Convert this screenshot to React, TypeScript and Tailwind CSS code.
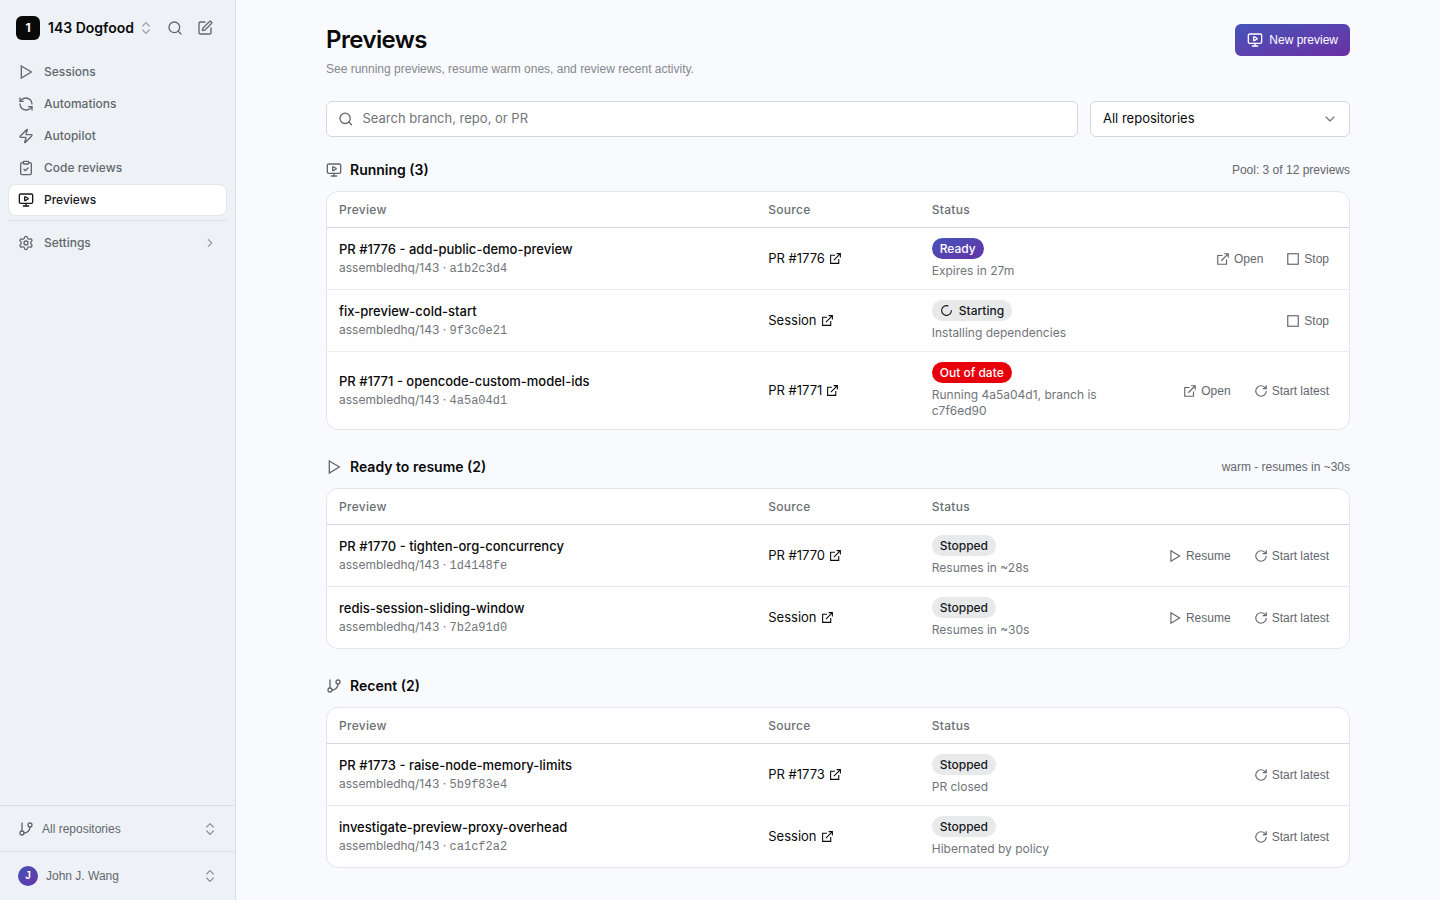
import type { ReactNode } from "react";
import {
  ChevronDown,
  ChevronRight,
  ChevronsUpDown,
  ClipboardCheck,
  GitBranch,
  LoaderCircle,
  MonitorPlay,
  RefreshCcw,
  Search,
  Settings,
  SquarePen,
  Zap,
} from "lucide-react";

type IconProps = { className?: string; strokeWidth?: number; children?: ReactNode };

function SharpIcon({ className, strokeWidth = 2, children }: IconProps) {
  return (
    <svg
      viewBox="0 0 24 24"
      fill="none"
      stroke="currentColor"
      strokeWidth={strokeWidth}
      strokeLinecap="butt"
      strokeLinejoin="miter"
      className={className}
      aria-hidden="true"
    >
      {children}
    </svg>
  );
}

function PlayIcon(props: IconProps) {
  return (
    <SharpIcon {...props}>
      <polygon points="5 3 20 12 5 21" />
    </SharpIcon>
  );
}

function StopIcon(props: IconProps) {
  return (
    <SharpIcon {...props}>
      <rect x="3" y="3" width="18" height="18" />
    </SharpIcon>
  );
}

function OpenIcon(props: IconProps) {
  return (
    <SharpIcon {...props}>
      <path d="M14 3h7v7M9 15 21 3M18 13v8H3V6h8" />
    </SharpIcon>
  );
}

function RestartIcon(props: IconProps) {
  return (
    <SharpIcon {...props}>
      <path d="M21 12a9 9 0 1 1-9-9c2.52 0 4.93 1 6.74 2.74L21 8" />
      <path d="M21 2v6h-6" />
    </SharpIcon>
  );
}

const navItems = [
  { label: "Sessions", icon: PlayIcon },
  { label: "Automations", icon: RefreshCcw },
  { label: "Autopilot", icon: Zap },
  { label: "Code reviews", icon: ClipboardCheck },
  { label: "Previews", icon: MonitorPlay, active: true },
];

type Action = "Open" | "Stop" | "Resume" | "Start latest";
type Status = "Ready" | "Starting" | "Out of date" | "Stopped";

type Preview = {
  name: string;
  commit: string;
  source: string;
  status: Status;
  detail: string;
  actions: Action[];
};

const running: Preview[] = [
  {
    name: "PR #1776 - add-public-demo-preview",
    commit: "a1b2c3d4",
    source: "PR #1776",
    status: "Ready",
    detail: "Expires in 27m",
    actions: ["Open", "Stop"],
  },
  {
    name: "fix-preview-cold-start",
    commit: "9f3c0e21",
    source: "Session",
    status: "Starting",
    detail: "Installing dependencies",
    actions: ["Stop"],
  },
  {
    name: "PR #1771 - opencode-custom-model-ids",
    commit: "4a5a04d1",
    source: "PR #1771",
    status: "Out of date",
    detail: "Running 4a5a04d1, branch is c7f6ed90",
    actions: ["Open", "Start latest"],
  },
];

const resumable: Preview[] = [
  {
    name: "PR #1770 - tighten-org-concurrency",
    commit: "1d4148fe",
    source: "PR #1770",
    status: "Stopped",
    detail: "Resumes in ~28s",
    actions: ["Resume", "Start latest"],
  },
  {
    name: "redis-session-sliding-window",
    commit: "7b2a91d0",
    source: "Session",
    status: "Stopped",
    detail: "Resumes in ~30s",
    actions: ["Resume", "Start latest"],
  },
];

const recent: Preview[] = [
  {
    name: "PR #1773 - raise-node-memory-limits",
    commit: "5b9f83e4",
    source: "PR #1773",
    status: "Stopped",
    detail: "PR closed",
    actions: ["Start latest"],
  },
  {
    name: "investigate-preview-proxy-overhead",
    commit: "ca1cf2a2",
    source: "Session",
    status: "Stopped",
    detail: "Hibernated by policy",
    actions: ["Start latest"],
  },
];

const badgeStyles: Record<Status, string> = {
  Ready: "bg-linear-to-br from-[#4353b8] to-[#6232a8] text-white",
  Starting: "bg-[#e8e9eb] text-[#18181b]",
  "Out of date": "bg-[#e7000b] text-white",
  Stopped: "bg-[#e8e9eb] text-[#18181b]",
};

const actionIcons = {
  Open: OpenIcon,
  Stop: StopIcon,
  Resume: PlayIcon,
  "Start latest": RestartIcon,
};

function Sidebar() {
  return (
    <aside className="flex w-[236px] shrink-0 flex-col border-r border-[#dbe0e6] bg-[#eef2f6] text-xs font-medium text-[#63676d]">
      <div className="flex h-14 items-center pl-4">
        <button className="flex items-center gap-2 text-sm font-semibold text-[#0a0a0b]">
          <span className="flex size-6 items-center justify-center rounded-md bg-[#0a0a0b] text-xs font-bold text-white">
            1
          </span>
          143 Dogfood
          <ChevronsUpDown className="-ml-1 size-4 text-[#9a9da2]" strokeWidth={1.75} />
        </button>
        <button aria-label="Search" className="ml-[13px]">
          <Search className="size-4" strokeWidth={2} />
        </button>
        <button aria-label="New session" className="ml-[14px]">
          <SquarePen className="size-4" strokeWidth={2} />
        </button>
      </div>
      <nav className="px-2">
        {navItems.map(({ label, icon: Icon, active }) => (
          <a
            key={label}
            href="#"
            className={
              active
                ? "flex h-8 items-center gap-[10px] rounded-lg border border-[#e2e5e9] bg-white px-[9px] text-[#18181b]"
                : "flex h-8 items-center gap-[10px] px-[10px]"
            }
          >
            <Icon className="size-4" strokeWidth={2} />
            {label}
          </a>
        ))}
        <div className="mt-1 border-t border-[#dbe0e6] pt-[6px]">
          <a href="#" className="flex h-8 items-center gap-[10px] px-[10px]">
            <Settings className="size-4" strokeWidth={2} />
            Settings
            <ChevronRight className="ml-auto size-[14px] text-[#9a9da2]" strokeWidth={2} />
          </a>
        </div>
      </nav>
      <div className="mt-auto font-['Liberation_Sans',sans-serif] font-normal">
        <button className="flex h-[46px] w-full items-center gap-2 border-t border-[#dbe0e6] pr-[17px] pl-[18px]">
          <GitBranch className="size-4" strokeWidth={2} />
          All repositories
          <ChevronsUpDown className="ml-auto size-4 text-[#8a8d92]" strokeWidth={1.75} />
        </button>
        <button className="flex h-[49px] w-full items-center gap-2 border-t border-[#dbe0e6] pr-[17px] pl-[18px]">
          <span className="flex size-5 items-center justify-center rounded-full bg-linear-to-br from-[#4353b8] to-[#6232a8] text-[10px] font-semibold text-white">
            J
          </span>
          John J. Wang
          <ChevronsUpDown className="ml-auto size-4 text-[#8a8d92]" strokeWidth={1.75} />
        </button>
      </div>
    </aside>
  );
}

function PreviewTable({ rows }: { rows: Preview[] }) {
  return (
    <div className="mt-[11px] overflow-hidden rounded-xl border border-[#e3e5e9] bg-white">
      <table className="w-full table-fixed border-separate border-spacing-0 text-left">
        <thead>
          <tr className="text-xs text-[#6b6e73] *:h-9 *:border-b *:border-[#d5d8dc] *:px-3 *:font-medium *:tracking-wide">
            <th className="w-[42%]">Preview</th>
            <th className="w-[16%]">Source</th>
            <th className="w-[19%]">Status</th>
            <th className="w-[23%]" aria-label="Actions" />
          </tr>
        </thead>
        <tbody>
          {rows.map((row) => (
            <tr
              key={row.name}
              className="*:border-b *:border-[#e8eaed] *:px-3 *:py-[10px] last:*:border-b-0"
            >
              <td>
                <div className="text-[13px] leading-5 font-medium text-[#0a0a0b]">{row.name}</div>
                <div className="text-xs leading-[18px] text-[#717479]">
                  assembledhq/143 ·{" "}
                  <span className="font-['Liberation_Mono',monospace]">{row.commit}</span>
                </div>
              </td>
              <td>
                <a href="#" className="flex w-fit items-center gap-1 text-[13px] text-[#0a0a0b]">
                  {row.source}
                  <OpenIcon className="size-[13px]" />
                </a>
              </td>
              <td>
                <span
                  className={`flex h-[21px] w-fit items-center gap-[6px] rounded-full px-2 text-xs font-medium ${badgeStyles[row.status]}`}
                >
                  {row.status === "Starting" && <LoaderCircle className="size-[13px]" />}
                  {row.status}
                </span>
                <div className="mt-1 text-xs leading-4 text-[#717479]">{row.detail}</div>
              </td>
              <td>
                <div className="flex justify-end gap-[7px]">
                  {row.actions.map((action) => {
                    const Icon = actionIcons[action];
                    return (
                      <button
                        key={action}
                        className="flex h-7 items-center gap-1 px-2 font-['Liberation_Sans',sans-serif] text-xs whitespace-nowrap text-[#63676d]"
                      >
                        <Icon className="size-[14px]" />
                        {action}
                      </button>
                    );
                  })}
                </div>
              </td>
            </tr>
          ))}
        </tbody>
      </table>
    </div>
  );
}

type SectionProps = { icon: ReactNode; title: string; note?: string; rows: Preview[] };

function Section({ icon, title, note, rows }: SectionProps) {
  return (
    <section>
      <div className="flex h-5 items-center gap-2">
        <span className="text-[#63676d]">{icon}</span>
        <h2 className="text-sm font-semibold text-[#0a0a0b]">{title}</h2>
        {note && (
          <span className="ml-auto font-['Liberation_Sans',sans-serif] text-xs text-[#63676d]">
            {note}
          </span>
        )}
      </div>
      <PreviewTable rows={rows} />
    </section>
  );
}

export default function App() {
  return (
    <div className="flex min-h-screen bg-[#f9fafd] font-[Inter,sans-serif]">
      <Sidebar />
      <main className="min-w-0 flex-1 px-6 pt-6 pb-8">
        <div className="mx-auto max-w-5xl">
          <header className="flex items-start justify-between">
            <div>
              <h1 className="text-2xl font-semibold tracking-tight text-[#0a0a0b]">Previews</h1>
              <p className="mt-[3px] font-['Liberation_Sans',sans-serif] text-xs leading-5 text-[#85888d]">
                See running previews, resume warm ones, and review recent activity.
              </p>
            </div>
            <button className="flex h-8 items-center gap-[6px] rounded-md bg-linear-to-br from-[#4353b8] to-[#6a2fa5] px-3 font-['Liberation_Sans',sans-serif] text-xs text-white">
              <MonitorPlay className="size-4" strokeWidth={2} />
              New preview
            </button>
          </header>
          <div className="mt-[22px] flex gap-3">
            <label className="flex h-9 flex-1 items-center gap-[9px] rounded-md border border-[#d5d8dc] bg-white px-[11px] text-[13px]">
              <Search className="size-4 text-[#63676d]" strokeWidth={2} />
              <input
                type="text"
                aria-label="Search previews"
                placeholder="Search branch, repo, or PR"
                className="w-full outline-none placeholder:text-[#717479]"
              />
            </label>
            <div className="relative w-[260px]">
              <select
                aria-label="Repository"
                className="h-9 w-full appearance-none rounded-md border border-[#d5d8dc] bg-white px-3 text-[13px] text-[#0a0a0b]"
              >
                <option>All repositories</option>
              </select>
              <ChevronDown
                className="pointer-events-none absolute top-[10px] right-3 size-4 text-[#717479]"
                strokeWidth={1.75}
              />
            </div>
          </div>
          <div className="mt-[23px] flex flex-col gap-[27px]">
            <Section
              icon={<MonitorPlay className="size-4" strokeWidth={2} />}
              title="Running (3)"
              note="Pool: 3 of 12 previews"
              rows={running}
            />
            <Section
              icon={<PlayIcon className="size-4" />}
              title="Ready to resume (2)"
              note="warm - resumes in ~30s"
              rows={resumable}
            />
            <Section
              icon={<GitBranch className="size-4" strokeWidth={2} />}
              title="Recent (2)"
              rows={recent}
            />
          </div>
        </div>
      </main>
    </div>
  );
}
